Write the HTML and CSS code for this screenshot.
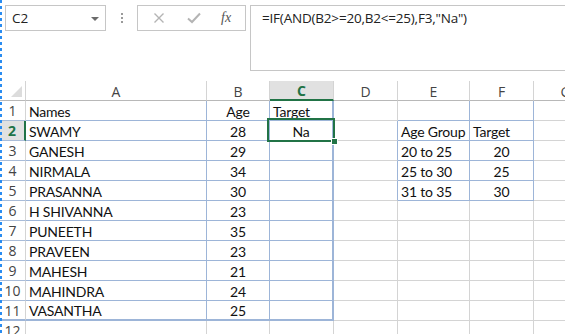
FILE: index.html
```html
<!DOCTYPE html>
<html>
<head>
<meta charset="utf-8">
<link rel="stylesheet" href="styles.css">
</head>
<body>
<div class="app">
  <div class="fbar">
    <div class="namebox"><span class="nb-text">C2</span><span class="caret"></span></div>
    <div class="dots"><i></i><i></i><i></i></div>
    <div class="btns">
      <svg class="ico" width="12" height="12" viewBox="0 0 12 12"><path d="M1.5 1.5 L10.5 10.5 M10.5 1.5 L1.5 10.5" stroke="#b4b4b4" stroke-width="1.4" fill="none"/></svg>
      <svg class="ico" width="14" height="12" viewBox="0 0 14 12"><path d="M1 6.5 L5 10 L13 1.5" stroke="#b4b4b4" stroke-width="2" fill="none"/></svg>
      <span class="fx">fx</span>
    </div>
    <div class="formula">=IF(AND(B2&gt;=20,B2&lt;=25),F3,"Na")</div>
  </div>
  <div class="sheet">
    <div class="hd corner"><span class="tri"></span></div>
    <div class="hd">A</div><div class="hd">B</div><div class="hd sel">C</div><div class="hd">D</div><div class="hd">E</div><div class="hd">F</div><div class="hd">G</div>

    <div class="rh b">1</div><div class="c b">Names</div><div class="c b ctr">Age</div><div class="c b cc">Target</div><div class="c"></div><div class="c b"></div><div class="c b"></div><div class="c"></div>
    <div class="rh b rsel">2</div><div class="c b">SWAMY</div><div class="c b ctr">28</div><div class="c b cc ctr selcell">Na<span class="selbox"><span class="handle"></span></span></div><div class="c bl"></div><div class="c b">Age Group</div><div class="c b">Target</div><div class="c"></div>
    <div class="rh b">3</div><div class="c b">GANESH</div><div class="c b ctr">29</div><div class="c b cc"></div><div class="c bl"></div><div class="c b">20 to 25</div><div class="c b ctr">20</div><div class="c"></div>
    <div class="rh b">4</div><div class="c b">NIRMALA</div><div class="c b ctr">34</div><div class="c b cc"></div><div class="c bl"></div><div class="c b">25 to 30</div><div class="c b ctr">25</div><div class="c"></div>
    <div class="rh b">5</div><div class="c b">PRASANNA</div><div class="c b ctr">30</div><div class="c b cc"></div><div class="c bl"></div><div class="c b">31 to 35</div><div class="c b ctr">30</div><div class="c"></div>
    <div class="rh b">6</div><div class="c b">H SHIVANNA</div><div class="c b ctr">23</div><div class="c b cc"></div><div class="c"></div><div class="c"></div><div class="c"></div><div class="c"></div>
    <div class="rh b">7</div><div class="c b">PUNEETH</div><div class="c b ctr">35</div><div class="c b cc"></div><div class="c"></div><div class="c"></div><div class="c"></div><div class="c"></div>
    <div class="rh b">8</div><div class="c b">PRAVEEN</div><div class="c b ctr">23</div><div class="c b cc"></div><div class="c"></div><div class="c"></div><div class="c"></div><div class="c"></div>
    <div class="rh b">9</div><div class="c b">MAHESH</div><div class="c b ctr">21</div><div class="c b cc"></div><div class="c"></div><div class="c"></div><div class="c"></div><div class="c"></div>
    <div class="rh b">10</div><div class="c b">MAHINDRA</div><div class="c b ctr">24</div><div class="c b cc"></div><div class="c"></div><div class="c"></div><div class="c"></div><div class="c"></div>
    <div class="rh b last">11</div><div class="c b last">VASANTHA</div><div class="c b ctr last">25</div><div class="c b cc last"></div><div class="c"></div><div class="c"></div><div class="c"></div><div class="c"></div>
    <div class="rh">12</div><div class="c"></div><div class="c"></div><div class="c"></div><div class="c"></div><div class="c"></div><div class="c"></div><div class="c"></div>
  </div>
  <span class="ants"></span>
</div>
</body>
</html>
```

FILE: styles.css
```css
* { box-sizing: border-box; }
html, body { margin: 0; padding: 0; background: #fff; overflow: hidden; }
.app { position: relative; width: 565px; height: 334px; overflow: hidden; }

.fbar { display: flex; align-items: flex-start; height: 81px; padding: 5px 0 0 5px; font-family: "Open Sans", "Noto Sans", sans-serif; }
.namebox { width: 101px; height: 26px; border: 1px solid #c6c6c6; display: flex; align-items: center; justify-content: space-between; padding: 0 6px 0 6px; }
.nb-text { font-size: 13.5px; color: #222; }
.caret { width: 0; height: 0; border-left: 4px solid transparent; border-right: 4px solid transparent; border-top: 4px solid #6b6b6b; margin-top: 1px; }
.dots { width: 31px; height: 26px; display: flex; flex-direction: column; align-items: center; justify-content: center; gap: 2px; }
.dots i { display: block; width: 2px; height: 2px; background: #9a9a9a; }
.btns { width: 109px; height: 26px; border: 1px solid #c6c6c6; display: flex; align-items: center; padding-left: 15px; }
.btns .ico:first-child { margin-right: 22px; }
.btns .ico:nth-child(2) { margin-right: 20px; }
.fx { font-family: "Liberation Serif", serif; font-style: italic; font-size: 14px; color: #555; }
.formula { flex: 1; height: 66px; margin-left: 4px; margin-right: -10px; border: 1px solid #c6c6c6; padding: 3px 0 0 11px; font-size: 13.5px; color: #222; letter-spacing: -0.2px; }

.sheet { display: grid; grid-template-columns: 26px 181px 63px 64px 64px 72px 64px 64px; grid-template-rows: 20px repeat(12, 20px); font-family: "Lato", "Open Sans", sans-serif; font-size: 14px; letter-spacing: -0.2px; color: #111; }
.hd { border-right: 1px solid #d4d4d4; border-bottom: 1px solid #b8b8b8; display: flex; align-items: center; justify-content: center; font-size: 14px; letter-spacing: 0; color: #444; font-family: "Open Sans", sans-serif; padding-top: 1px; }
.hd.sel { background: #e1e1e1; color: #217346; font-weight: bold; border-bottom: 2px solid #217346; }
.corner { position: relative; }
.tri { position: absolute; right: 3px; bottom: 3px; width: 0; height: 0; border-left: 11px solid transparent; border-bottom: 11px solid #dcdcdc; }
.rh { border-right: 1px solid #d4d4d4; border-bottom: 1px solid #d4d4d4; display: flex; align-items: center; justify-content: center; font-size: 14px; letter-spacing: 0; color: #444; font-family: "Open Sans", sans-serif; }
.rh.b { border-bottom-color: #a9bcd8; }
.rh.rsel { background: #e1e1e1; color: #217346; font-weight: bold; border-right: 2px solid #217346; }
.c { border-right: 1px solid #d4d4d4; border-bottom: 1px solid #d4d4d4; padding: 1px 3px 0; display: flex; align-items: center; white-space: nowrap; }
.c.b { border-color: #9db5d8; }
.c.bl { border-right-color: #9db5d8; }
.c.ctr { justify-content: center; }
.c.cc { border-right: 2px solid #9db5d8; }
.c.last { border-bottom: 2px solid #9db5d8; }
.rh.last { border-bottom: 2px solid #9db5d8; }
.selcell { position: relative; }
.selbox { position: absolute; left: -3px; top: -3px; right: -3px; bottom: -2px; border: 2px solid #217346; }
.handle { position: absolute; right: -5px; bottom: -5px; width: 7px; height: 7px; background: #217346; border: 1px solid #fff; }
.ants { position: absolute; left: 0; top: 0; bottom: 0; width: 2px; background: repeating-linear-gradient(to bottom, #2a8cf0 0 3px, transparent 3px 6px); }
```
